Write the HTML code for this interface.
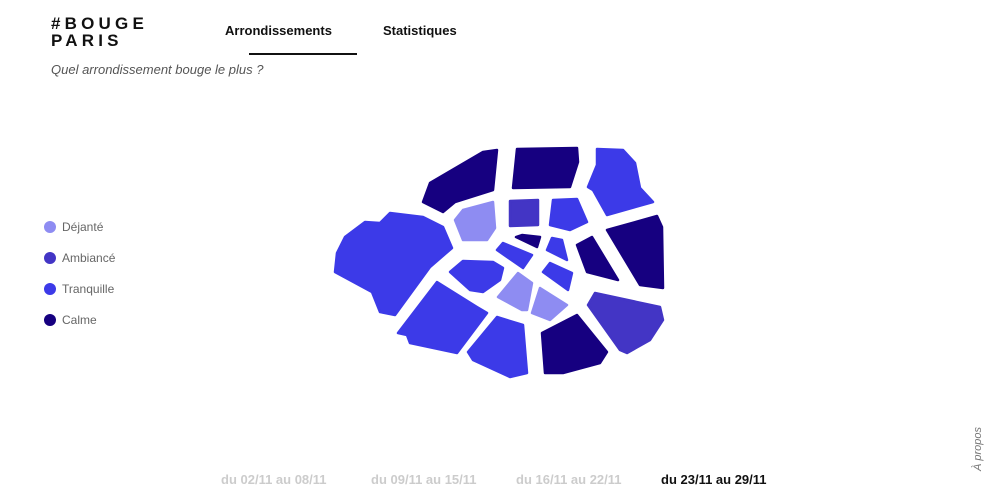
<!DOCTYPE html>
<html><head><meta charset="utf-8"><style>
body{margin:0;width:1000px;height:502px;background:#fff;font-family:"Liberation Sans",sans-serif;position:relative;overflow:hidden}
.logo{position:absolute;left:51px;top:15px;font-weight:bold;font-size:17px;letter-spacing:4.2px;line-height:17px;color:#111}
.nav{position:absolute;top:23px;font-weight:bold;font-size:13px;color:#111}
.ul{position:absolute;left:249px;top:53px;width:108px;height:2px;background:#111}
.q{position:absolute;left:51px;top:62px;font-style:italic;font-size:13px;color:#555}
.leg{position:absolute;left:44px;font-size:12px;color:#666}
.leg i{display:inline-block;width:12px;height:12px;border-radius:50%;vertical-align:-2px;margin-right:6px}
.d{position:absolute;top:472px;font-weight:bold;font-size:13px;color:#ccc}
.ap{position:absolute;left:948px;top:443px;transform:rotate(-90deg);font-style:italic;font-size:11px;color:#777;width:60px;text-align:center}
</style></head><body>
<div class="logo">#BOUGE<br>PARIS</div>
<div class="nav" style="left:225px">Arrondissements</div>
<div class="nav" style="left:383px">Statistiques</div>
<div class="ul"></div>
<div class="q">Quel arrondissement bouge le plus ?</div>
<div class="leg" style="top:220px"><i style="background:#8e8cf2"></i>Déjanté</div>
<div class="leg" style="top:251px"><i style="background:#4335c5"></i>Ambiancé</div>
<div class="leg" style="top:282px"><i style="background:#3c3ae8"></i>Tranquille</div>
<div class="leg" style="top:313px"><i style="background:#160080"></i>Calme</div>
<svg width="1000" height="502" style="position:absolute;left:0;top:0" stroke-linejoin="round">
<g stroke-width="2.5">
<polygon fill="#160080" stroke="#160080" points="430,183 483,152 497,150 493,190 455,202 443,212 423,202"/>
<polygon fill="#160080" stroke="#160080" points="517,149 577,148 578,162 570,187 513,188"/>
<polygon fill="#3c3ae8" stroke="#3c3ae8" points="597,149 623,150 635,163 640,188 653,202 607,215 593,190 588,187 597,165"/>
<polygon fill="#3c3ae8" stroke="#3c3ae8" points="345,237 365,222 380,223 390,213 423,217 443,227 452,248 430,267 395,315 380,312 372,292 335,272 337,253"/>
<polygon fill="#8e8cf2" stroke="#8e8cf2" points="455,220 463,210 493,202 495,228 487,240 463,240"/>
<polygon fill="#4335c5" stroke="#4335c5" points="510,201 538,200 538,225 510,226"/>
<polygon fill="#3c3ae8" stroke="#3c3ae8" points="553,200 577,199 587,222 570,230 550,225"/>
<polygon fill="#160080" stroke="#160080" points="516,237 522,235 540,237 537,247"/>
<polygon fill="#3c3ae8" stroke="#3c3ae8" points="552,238 562,240 567,260 547,250"/>
<polygon fill="#160080" stroke="#160080" points="577,245 592,237 618,280 587,272"/>
<polygon fill="#160080" stroke="#160080" points="607,230 657,216 662,227 663,288 640,285"/>
<polygon fill="#3c3ae8" stroke="#3c3ae8" points="497,250 503,243 532,255 523,268"/>
<polygon fill="#3c3ae8" stroke="#3c3ae8" points="543,272 550,263 572,273 568,290"/>
<polygon fill="#3c3ae8" stroke="#3c3ae8" points="450,272 463,261 493,262 503,268 500,280 483,292 470,290"/>
<polygon fill="#8e8cf2" stroke="#8e8cf2" points="498,297 518,273 532,283 527,310 522,310"/>
<polygon fill="#8e8cf2" stroke="#8e8cf2" points="532,313 540,288 567,305 550,320"/>
<polygon fill="#3c3ae8" stroke="#3c3ae8" points="398,333 437,282 477,307 487,313 457,353 410,343 407,335"/>
<polygon fill="#3c3ae8" stroke="#3c3ae8" points="468,352 497,317 523,325 527,373 510,377 473,360"/>
<polygon fill="#160080" stroke="#160080" points="542,333 577,315 607,352 600,363 563,373 545,373"/>
<polygon fill="#4335c5" stroke="#4335c5" points="588,305 595,293 660,307 663,320 650,340 627,353 620,350"/>
</g></svg>
<div class="d" style="left:221px">du 02/11 au 08/11</div>
<div class="d" style="left:371px">du 09/11 au 15/11</div>
<div class="d" style="left:516px">du 16/11 au 22/11</div>
<div class="d" style="left:661px;color:#111">du 23/11 au 29/11</div>
<div class="ap">À propos</div>
</body></html>
